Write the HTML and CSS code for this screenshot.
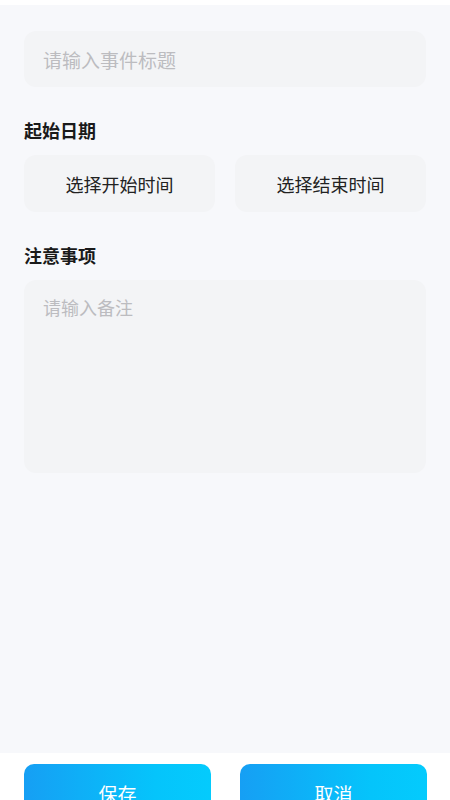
FILE: index.html
```html
<!DOCTYPE html>
<html lang="zh">
<head>
<meta charset="utf-8">
<meta name="viewport" content="width=device-width, initial-scale=1">
<link rel="stylesheet" href="styles.css">
</head>
<body>
<div class="page">
  <div class="top-strip"></div>
  <main class="content">
    <div class="field title-field"><span class="placeholder title-ph">请输入事件标题</span></div>
    <div class="label">起始日期</div>
    <div class="date-row">
      <div class="date-btn">选择开始时间</div>
      <div class="date-btn">选择结束时间</div>
    </div>
    <div class="label">注意事项</div>
    <div class="field notes-field"><span class="placeholder">请输入备注</span></div>
  </main>
  <footer class="footer">
    <div class="action">保存</div>
    <div class="action">取消</div>
  </footer>
</div>
</body>
</html>
```
FILE: styles.css
```css
html, body {
  margin: 0;
  padding: 0;
  height: 100%;
  overflow: hidden;
}
body {
  background: #f7f8fb;
  font-family: "Noto Sans CJK SC", "Noto Sans", sans-serif;
  color: #222;
}
.page {
  height: 100vh;
  display: flex;
  flex-direction: column;
}
.top-strip {
  height: 5px;
  background: #ffffff;
  flex: none;
}
.content {
  flex: 1;
  padding: 26px 24px 0;
  display: flex;
  flex-direction: column;
}
.field {
  background: #f3f4f6;
  border-radius: 12px;
  box-sizing: border-box;
}
.title-field {
  height: 56px;
  display: flex;
  align-items: center;
  padding-left: 19px;
}
.placeholder {
  font-size: 18px;
  color: #bcbcc0;
  line-height: 1;
}
.title-ph {
  font-size: 19px;
}
.label {
  font-size: 18px;
  font-weight: 700;
  color: #1a1a1a;
  margin-top: 33px;
  line-height: 20px;
}
.date-row {
  display: grid;
  grid-template-columns: 1fr 1fr;
  gap: 20px;
  margin-top: 15px;
}
.date-btn {
  height: 57px;
  background: #f3f4f6;
  border-radius: 12px;
  display: flex;
  align-items: center;
  justify-content: center;
  font-size: 18px;
  color: #222;
}
.notes-field {
  margin-top: 15px;
  height: 193px;
  padding: 16px 19px;
}
.footer {
  flex: none;
  height: 47px;
  background: #ffffff;
  box-sizing: border-box;
  padding: 11px 23px 0 24px;
  display: grid;
  grid-template-columns: 187px 187px;
  justify-content: space-between;
  overflow: visible;
}
.action {
  height: 56px;
  border-radius: 10px;
  background: linear-gradient(90deg, #169ff4 0%, #05c4fb 70%, #04cbfd 100%);
  color: #ffffff;
  font-size: 19px;
  display: flex;
  align-items: center;
  justify-content: center;
  padding-top: 2px;
  box-sizing: border-box;
}
```
